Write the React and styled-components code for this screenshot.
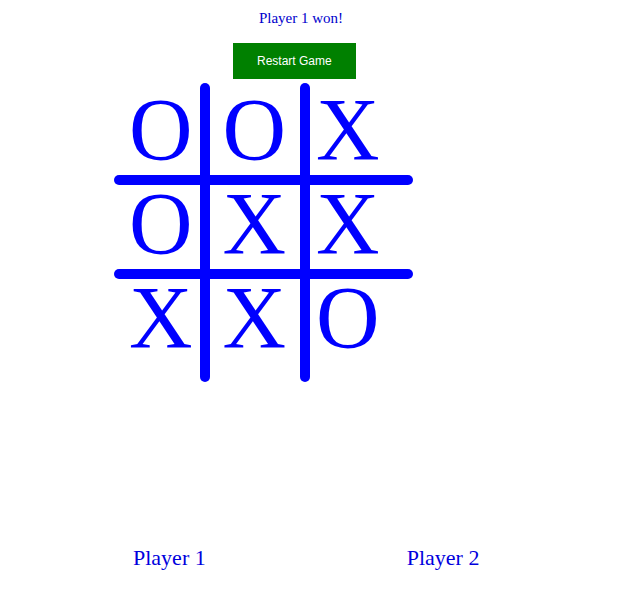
import React from "react";
import styled, { createGlobalStyle } from "styled-components";

const Global = createGlobalStyle`
  body {
    margin: 8px;
    background: #ffffff;
    font-family: "Liberation Serif", "Times New Roman", serif;
  }
`;

const Page = styled.div`
  display: flex;
  flex-direction: column;
  align-items: flex-start;
`;

const Status = styled.div`
  width: 586px;
  padding-top: 2px;
  text-align: center;
  font-family: "Liberation Serif", serif;
  font-size: 15px;
  line-height: 17px;
  color: #0000cc;
`;

const RestartButton = styled.button`
  margin: 16px 0 0 225px;
  padding: 11px 24px;
  border: none;
  background: #008000;
  color: #ffffff;
  font-family: "Liberation Sans", Arial, sans-serif;
  font-size: 12px;
  line-height: 14px;
  cursor: pointer;
`;

const Board = styled.div`
  position: relative;
  margin: 4px 0 0 106px;
  width: 300px;
  height: 300px;
`;

const Grid = styled.div`
  display: grid;
  grid-template-columns: repeat(3, 93.5px);
  grid-template-rows: repeat(3, 94px);
`;

const Cell = styled.div`
  font-family: "Liberation Serif", "Times New Roman", serif;
  font-size: 88px;
  line-height: 94px;
  text-align: center;
  color: #0000ff;
`;

const Lines = styled.svg`
  position: absolute;
  left: 0;
  top: 0;
  pointer-events: none;
`;

const Players = styled.div`
  display: flex;
  gap: 201px;
  margin: 162px 0 0 125px;
`;

const PlayerLabel = styled.div`
  font-family: "Liberation Serif", serif;
  font-size: 22px;
  color: #0000dd;
`;

const cells = ["O", "O", "X", "O", "X", "X", "X", "X", "O"];

export default function App() {
  return (
    <>
      <Global />
      <Page>
        <Status>Player 1 won!</Status>
        <RestartButton>Restart Game</RestartButton>
        <Board>
          <Grid>
            {cells.map((c, i) => (
              <Cell key={i}>{c}</Cell>
            ))}
          </Grid>
          <Lines width="300" height="300" viewBox="0 0 300 300">
            <g stroke="#0000ff" strokeWidth="10" strokeLinecap="round">
              <line x1="91" y1="5" x2="91" y2="294" />
              <line x1="191" y1="5" x2="191" y2="294" />
              <line x1="5" y1="97" x2="294" y2="97" />
              <line x1="5" y1="191" x2="294" y2="191" />
            </g>
          </Lines>
        </Board>
        <Players>
          <PlayerLabel>Player 1</PlayerLabel>
          <PlayerLabel>Player 2</PlayerLabel>
        </Players>
      </Page>
    </>
  );
}
